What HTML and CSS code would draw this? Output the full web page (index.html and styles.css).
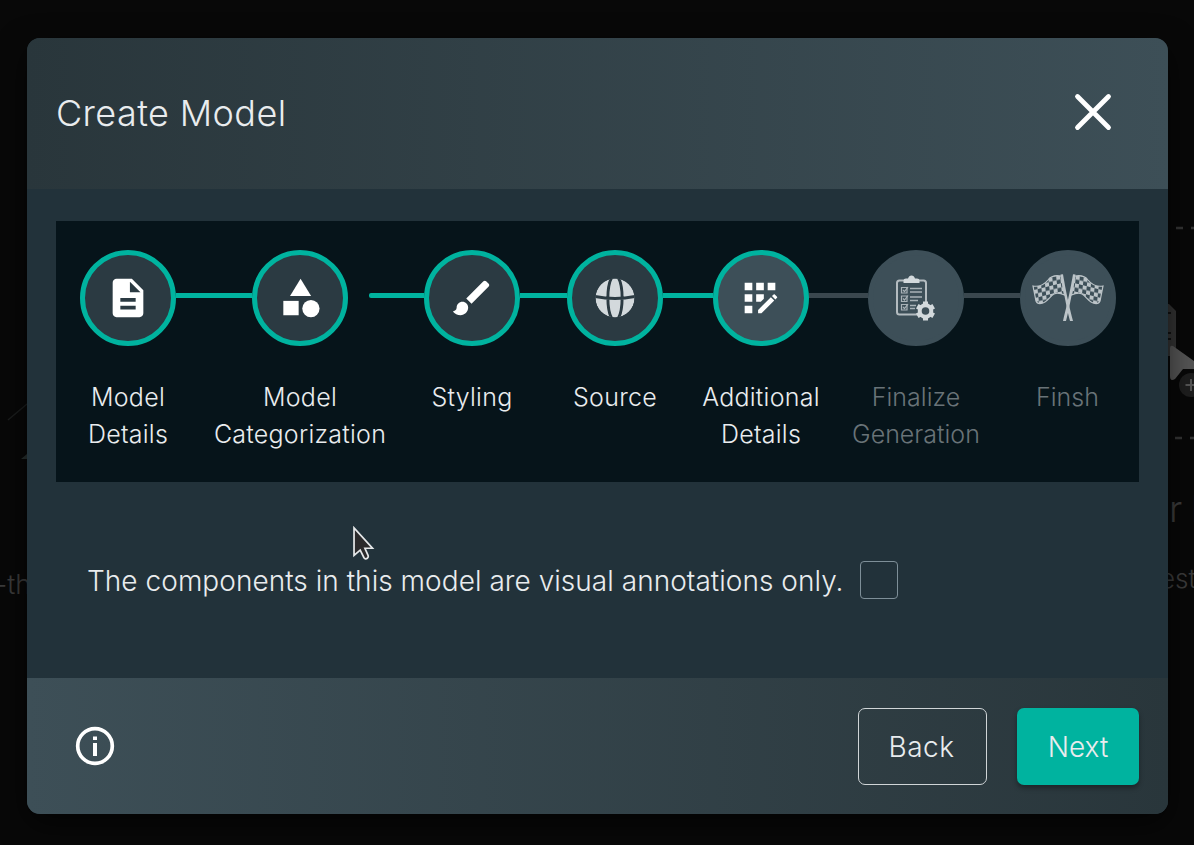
FILE: index.html
```
<!DOCTYPE html>
<html lang="en">
<head>
<meta charset="utf-8">
<title>Create Model</title>
<link rel="stylesheet" href="styles.css">
</head>
<body>
<div class="backdrop" aria-hidden="true">
  <svg class="backdrop-art" viewBox="0 0 1194 845" fill="none">
    <path d="M8 420L27 404" stroke="#1b1d1d" stroke-width="1.5"/>
    <path d="M21 459L27 454V459Z" fill="#28302f"/>
    <path d="M1168 228H1194" stroke="#343434" stroke-width="2.5" stroke-dasharray="7 8" stroke-dashoffset="-8"/>
    <path d="M1175 438H1194" stroke="#343434" stroke-width="2.5" stroke-dasharray="7 8"/>
    <path d="M1160 304H1169L1176 311V356H1160Z" fill="#333"/>
    <path d="M1168 313H1171M1168 333H1171M1168 339H1171" stroke="#111" stroke-width="2"/>
    <path d="M1170 348Q1170 345 1173 346L1194 361V369H1183L1175 379Q1170 382 1170 376Z" fill="#555"/>
    <circle cx="1191" cy="385" r="12" fill="#1e1e1e"/>
    <path d="M1185.500 385H1197M1191 379V391" stroke="#555" stroke-width="2"/>
  </svg>
  <span class="ghost ghost-left">-th</span>
  <span class="ghost ghost-title">r I</span>
  <span class="ghost ghost-right">est</span>
</div>

<main class="dialog">
  <header class="dialog-header">
    <h1 class="title">Create Model</h1>
    <svg class="close" viewBox="0 0 40 40"><path d="M4.500 4.500L35.500 35.500M35.500 4.500L4.500 35.500" stroke="#fff" stroke-width="4.800" stroke-linecap="round"/></svg>
  </header>

  <section class="dialog-body">
    <ol class="stepper">
      <li class="step">
        <div class="track"><i></i>
          <span class="node done"><svg class="icon" viewBox="0 0 24 24"><path d="M14 2H6c-1.100 0-1.990.9-1.990 2L4 20c0 1.100.89 2 1.990 2H18c1.100 0 2-.9 2-2V8l-6-6zm2 16H8v-2h8v2zm0-4H8v-2h8v2zm-3-5V3.500L18.500 9H13z"/></svg></span>
        <i class="line on"></i></div>
        <span class="label">Model<br>Details</span>
      </li>
      <li class="step">
        <div class="track"><i class="line on"></i>
          <span class="node done"><svg class="icon" viewBox="0 0 24 24"><path d="M12.300 2l-5.500 9h11z"/><circle cx="17.700" cy="17.500" r="4.500"/><path d="M3.300 13.500h8v7.500h-8z"/></svg></span>
        <i class="line on short"></i></div>
        <span class="label">Model<br>Categorization</span>
      </li>
      <li class="step">
        <div class="track"><i class="line on"></i>
          <span class="node done"><svg class="icon" viewBox="0 0 24 24"><path d="M7 14c-1.660 0-3 1.340-3 3 0 1.310-1.160 2-2 2 .92 1.220 2.490 2 4 2 2.210 0 4-1.790 4-4 0-1.660-1.340-3-3-3zm13.710-9.370l-1.340-1.340a1 1 0 0 0-1.410 0L9 12.250 11.750 15l8.960-8.960c.39-.39.39-1.020 0-1.410z"/></svg></span>
        <i class="line on"></i></div>
        <span class="label">Styling</span>
      </li>
      <li class="step">
        <div class="track"><i class="line on"></i>
          <span class="node done"><svg class="globe" viewBox="0 0 40 40">
            <clipPath id="disc"><circle cx="20" cy="20" r="19.500"/></clipPath>
            <g clip-path="url(#disc)">
              <circle cx="20" cy="20" r="19.500" fill="#d3d9dc"/>
              <path d="M17 -1C11.500 8 11.500 32 17 41M23 -1C28.500 8 28.500 32 23 41M0 18.500Q20 22.500 40 18.500" fill="none" stroke="#2b3a42" stroke-width="2.900"/>
            </g></svg></span>
        <i class="line on"></i></div>
        <span class="label">Source</span>
      </li>
      <li class="step">
        <div class="track"><i class="line on"></i>
          <span class="node current"><svg class="icon" viewBox="0 0 24 24"><path d="M10 4h4v4h-4zM4 16h4v4H4zM4 10h4v4H4zM4 4h4v4H4zM16 4h4v4h-4zM14 12.420V10h-4v4h2.420zM20.880 11.290l-1.170-1.170c-.16-.16-.42-.16-.58 0l-.88.88L20 12.750l.88-.88c.16-.16.16-.42 0-.58zM11 18.250V20h1.750l6.670-6.670-1.750-1.750z"/></svg></span>
        <i class="line"></i></div>
        <span class="label">Additional<br>Details</span>
      </li>
      <li class="step">
        <div class="track"><i class="line"></i>
          <span class="node"><svg class="clipboard" viewBox="0 0 42 48" fill="none">
            <rect x="3" y="6.500" width="29" height="34" rx="2.500" stroke="#b4bcc0" stroke-width="2"/>
            <path d="M9.500 9V6.500Q9.500 4.500 12 4.500H14Q15 1.500 17.500 1.500T21 4.500H23Q25.500 4.500 25.500 6.500V9Z" fill="#d3d9dc"/>
            <g stroke="#a9b2b7" stroke-width="1.200">
              <path d="M7.500 13.500h5.500v5.500H7.500zM7.500 22h5.500v5.500H7.500zM7.500 30.500h5.500v5.500H7.500z"/>
              <path d="M9 16l1.500 1.500L14 13M9 24.500l1.500 1.500L14 21.500M9 33l1.500 1.500L14 30"/>
              <path d="M16 14.500H28M16 18H28M16 23H28M16 26.500H24M16 31.500H22M16 34.500H21" stroke-width="1.400"/>
            </g>
            <circle cx="31.500" cy="37" r="8.500" fill="#3d4f58"/>
            <circle cx="31.500" cy="37" r="5.800" stroke="#d3d9dc" stroke-width="4"/>
            <path d="M31.500 27.500v3.500M31.500 43v3.500M23.300 32.250l3 1.750M36.700 40l3 1.750M23.300 41.750l3-1.750M36.700 34l3-1.750" stroke="#d3d9dc" stroke-width="5"/>
          </svg></span>
        <i class="line"></i></div>
        <span class="label muted">Finalize<br>Generation</span>
      </li>
      <li class="step">
        <div class="track"><i class="line"></i>
          <span class="node"><svg class="flags" viewBox="0 0 72 48">
            <defs>
              <pattern id="checks" width="8" height="8" patternUnits="userSpaceOnUse" patternTransform="rotate(-14) skewX(-8)"><path d="M0 0h4v4H0zM4 4h4v4H4z" fill="#bcc4c8"/></pattern>
              <g id="flag">
                <path d="M29 2C24 1 19 2 16 6C12 11 7 13 1 12L4 27Q5 30 9 29.500C15 29 18 22 22 20Q26 18 32.500 21Z" fill="url(#checks)" stroke="#bcc4c8" stroke-width="1.200"/>
                <path d="M28.500 .5L31 .3C33 12 35 23 41 47H38C34 32 32 18 28.500 .5Z" fill="#bcc4c8"/>
              </g>
            </defs>
            <use href="#flag"/><use href="#flag" transform="translate(72 0) scale(-1 1)"/>
          </svg></span>
        <i></i></div>
        <span class="label muted">Finsh</span>
      </li>
    </ol>

    <label class="annotation"><span class="annotation-text">The components in this model are visual annotations only.</span><input class="check" type="checkbox"></label>
  </section>

  <footer class="dialog-footer">
    <svg class="info" viewBox="0 0 40 40"><circle cx="20" cy="20" r="17.300" fill="none" stroke="#fff" stroke-width="3.700"/><path d="M18 10.500h4v3.600h-4zM18 17h4v13h-4z" fill="#fff"/></svg>
    <div class="actions">
      <button class="btn back">Back</button>
      <button class="btn next">Next</button>
    </div>
  </footer>
</main>

<svg class="cursor" viewBox="0 0 24 38"><path d="M2 2V31L8.500 25.500L12.500 33.500Q14 35.500 16 34Q17.500 33 16.800 31L13.500 23.500H21.500Z" fill="#2b2a2b" stroke="#e6e8e9" stroke-width="1.800"/></svg>
</body>
</html>
```
FILE: styles.css
```
* { box-sizing: border-box; }

body {
  margin: 0;
  height: 845px;
  padding: 38px 26px 31px 27px;
  overflow: hidden;
  background: #080808;
  color: #e9ecee;
  font-family: Inter, "Liberation Sans", sans-serif;
  font-weight: 300;
}

.backdrop { position: absolute; inset: 0; overflow: hidden; }
.backdrop-art { display: block; width: 1194px; height: 845px; }
.ghost { position: absolute; color: #3b3b3b; line-height: 1; white-space: pre; }
.ghost-left { left: -5px; top: 571px; font-size: 27px; }
.ghost-title { left: 1169px; top: 490px; font-size: 37px; letter-spacing: -1px; }
.ghost-right { left: 1160px; top: 566px; font-size: 26px; }

.dialog {
  position: relative;
  display: flex;
  flex-direction: column;
  height: 776px;
  border-radius: 13px;
  overflow: hidden;
  background: #22323a;
  box-shadow: 0 10px 30px rgba(0, 0, 0, .6);
}

.dialog-header {
  display: flex;
  align-items: center;
  justify-content: space-between;
  height: 151px;
  padding: 0 55px 0 29px;
  background: linear-gradient(90deg, #29363b, #3d4f57);
}
.title { margin: 0 0 1px; font-size: 36px; font-weight: 300; letter-spacing: .4px; }
.close { width: 40px; height: 40px; margin-bottom: 3px; }

.dialog-body { flex: 1; padding: 32px 29px 0; }

.stepper {
  display: grid;
  grid-template-columns: 144px 200px 144px 142px 150px 160px 1fr;
  height: 261px;
  margin: 0;
  padding: 29px 0 0;
  list-style: none;
  background: #06141a;
}
.step { display: flex; flex-direction: column; align-items: center; gap: 33px; }
.track { display: grid; grid-template-columns: 1fr 96px 1fr; width: 100%; }
.line { height: 5px; margin-top: 43px; background: #3a474e; }
.line.on { background: #00b39f; }
.line.short { margin-left: 21px; border-radius: 2px 0 0 2px; }
.node {
  display: flex;
  align-items: center;
  justify-content: center;
  width: 96px;
  height: 96px;
  border: 5px solid #3d4f58;
  border-radius: 50%;
  background: #3d4f58;
}
.node.done { border-color: #00b39f; background: #2b3a42; }
.node.current { border-color: #00b39f; }
.icon { width: 46px; height: 46px; fill: #fff; }
.current .icon { margin-right: 2px; }
.globe { width: 40px; height: 40px; }
.clipboard { width: 42px; height: 48px; margin-right: 3px; }
.flags { width: 72px; height: 48px; }

.label {
  font-size: 25px;
  line-height: 37px;
  letter-spacing: .25px;
  text-align: center;
  white-space: nowrap;
}
.muted { color: #697378; letter-spacing: 0; }

.annotation {
  display: flex;
  align-items: center;
  gap: 18px;
  margin: 79px 0 0 31px;
}
.annotation-text { width: 755px; padding-top: 2px; font-size: 28px; line-height: 36px; letter-spacing: .04px; white-space: nowrap; }
.check {
  appearance: none;
  width: 38px;
  height: 38px;
  margin: 0;
  border: 1.500px solid #7e8f98;
  border-radius: 4px;
}

.dialog-footer {
  display: flex;
  align-items: center;
  justify-content: space-between;
  height: 136px;
  padding: 0 29px 0 48px;
  background: linear-gradient(90deg, #3d4f57, #29363b);
}
.info { width: 40px; height: 40px; }
.actions { display: flex; gap: 30px; }
.btn {
  height: 77px;
  border-radius: 7px;
  font: 300 28px Inter, "Liberation Sans", sans-serif;
  color: #e9ecee;
  padding: 2px 0 0;
}
.back { width: 129px; padding-right: 2px; border: 1.500px solid #d0d5d7; background: transparent; letter-spacing: .5px; }
.next { width: 122px; border: 0; background: #00b39f; box-shadow: 0 3px 5px rgba(0, 0, 0, .35); }

.cursor { position: absolute; left: 352px; top: 526px; width: 23px; height: 36px; }
```
